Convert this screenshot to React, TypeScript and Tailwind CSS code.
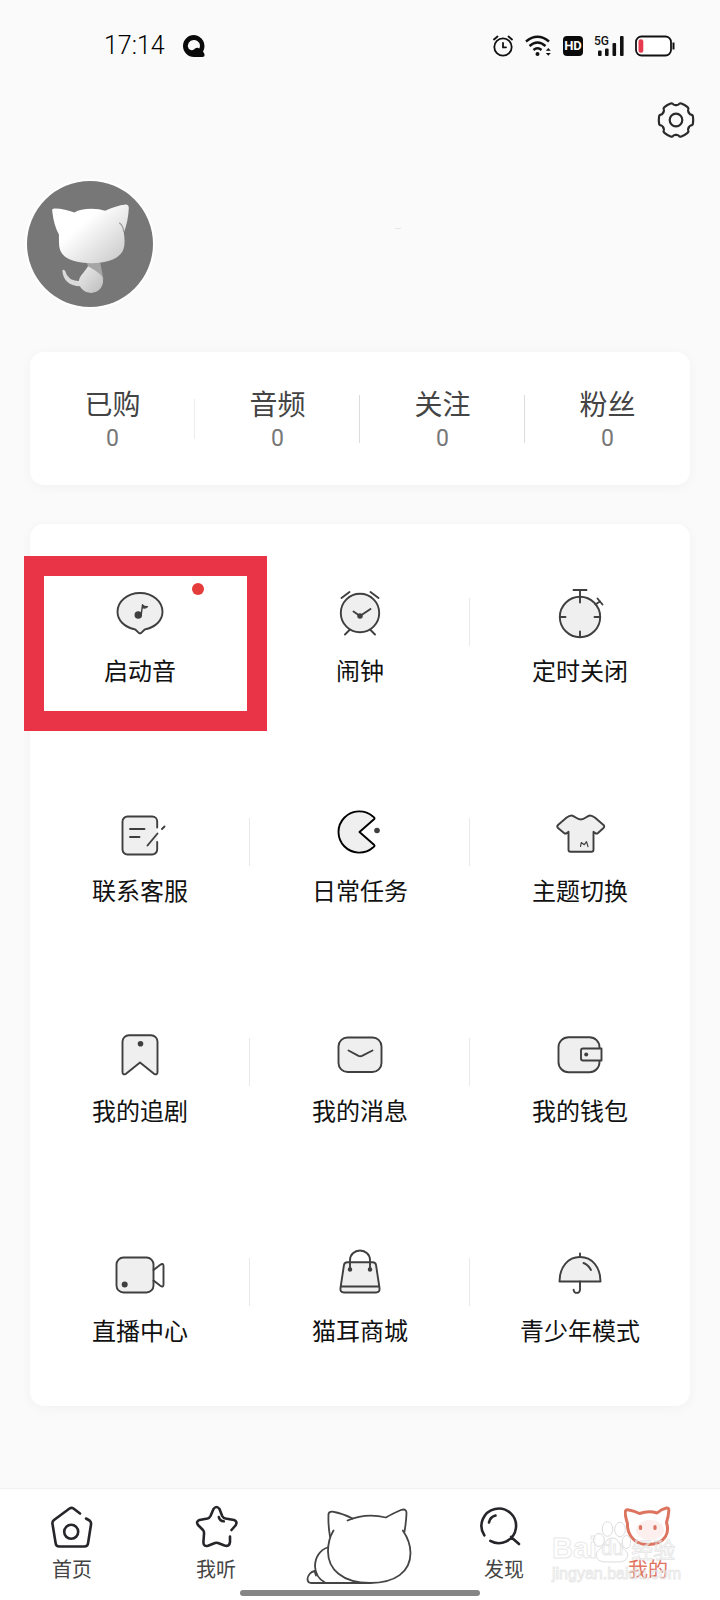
import type { ReactNode } from 'react';
import { clsx } from 'clsx';

const INK = '#3f3f3f';
const SHADE = '#efefef';

const stats = [
  { label: '已购', value: 0, divider: 'h-10 bg-[#ececec]' },
  { label: '音频', value: 0, divider: 'h-12 bg-[#dcdcdc]' },
  { label: '关注', value: 0, divider: 'h-12 bg-[#dcdcdc]' },
  { label: '粉丝', value: 0, divider: '' },
];

function TileIcon({ children, stroke = INK }: { children: ReactNode; stroke?: string }) {
  return (
    <svg
      viewBox="0 0 56 56"
      className="h-14 w-14"
      fill="none"
      stroke={stroke}
      strokeWidth="1.9"
      strokeLinecap="round"
      strokeLinejoin="round"
      aria-hidden="true"
    >
      {children}
    </svg>
  );
}

const tiles = [
  {
    label: '启动音',
    highlighted: true,
    icon: (
      <TileIcon>
        <path
          d="M22.5 44.2C12 42 5.5 35 5.5 26.8 5.5 16.2 15.5 8 28 8s22.5 8.2 22.5 18.8c0 8.2-6.5 15.2-17 17.4-2.2.8-3.6 4.3-5.5 4.3s-3.3-3.5-5.5-4.3z"
          fill={SHADE}
        />
        <circle cx="26.3" cy="30" r="2.8" fill={INK} />
        <path d="M29.2 30 30.5 19.8q1.5 2 5 1.8-2 2.200-5.2 1" fill={INK} strokeWidth="1.4" />
      </TileIcon>
    ),
  },
  {
    label: '闹钟',
    icon: (
      <TileIcon>
        <circle cx="28" cy="28" r="19.2" fill={SHADE} />
        <path d="M9.5 13l8-6M38.5 7l8 6M17.5 45 13 49.5M38.5 45l4.5 4.5" />
        <path d="M21.5 26.5 28 31l10.500-7" />
        <circle cx="28" cy="31" r="1.8" fill={INK} />
      </TileIcon>
    ),
  },
  {
    label: '定时关闭',
    icon: (
      <TileIcon>
        <circle cx="28" cy="32" r="20.2" fill={SHADE} />
        <path d="M21.5 5h13M28 5v12.5M8 32h5.5M42.5 32H48M28 46.5V52" />
        <path d="M45.5 13.5l5 6M43.5 19.5l4.5-3.3" />
      </TileIcon>
    ),
  },
  {
    label: '联系客服',
    icon: (
      <TileIcon>
        <rect x="10.5" y="11.5" width="35" height="38" rx="5" fill={SHADE} stroke="none" />
        <path d="M45.2 22.5v-6a5 5 0 0 0-5-5H15.5a5 5 0 0 0-5 5v28a5 5 0 0 0 5 5h24.7a5 5 0 0 0 5-5v-7.5" />
        <path d="M18 24h14.5M18 32h9.5M35.5 40.5l10-12M50 24l2.5-2.5" />
      </TileIcon>
    ),
  },
  {
    label: '日常任务',
    icon: (
      <TileIcon stroke="#000">
        <path d="M41 11.5A20.8 20.6 0 1 0 41 42.500q2.500-1.500 1-2.800L27.5 27 42 14.300q1.500-1.300-1-2.800z" fill={SHADE} />
        <circle cx="45" cy="25.5" r="2.8" fill={INK} stroke="none" />
      </TileIcon>
    ),
  },
  {
    label: '主题切换',
    icon: (
      <TileIcon>
        <path
          d="M19.5 10.5c3 0 5 4 9.3 4s6.2-4 9.2-4c2.5 0 4 1.5 6 3l7.5 6.5q1.5 1.5 0 3L46 28q-1.5 1.2-3 0l-1.5-1.2v18q0 2-2 2h-21q-2 0-2-2v-18L15 28q-1.5 1.2-3 0l-6-5q-1.5-1.5 0-3l7.5-6.5c2-1.5 3.5-3 6-3z"
          fill={SHADE}
        />
        <path d="M28.5 41.5l.8-4 3 2.200 2.200-3 1.500 5" strokeWidth="1.2" />
      </TileIcon>
    ),
  },
  {
    label: '我的追剧',
    icon: (
      <TileIcon>
        <path d="M17 10.200h22a6.5 6.5 0 0 1 6.5 6.5V47q0 3.5-3.5 1.8L28 37.500 14 48.8q-3.5 1.700-3.5-1.8V16.700a6.5 6.5 0 0 1 6.5-6.5z" fill={SHADE} />
        <circle cx="28.5" cy="18.7" r="2.8" fill={INK} stroke="none" />
      </TileIcon>
    ),
  },
  {
    label: '我的消息',
    icon: (
      <TileIcon>
        <rect x="6.5" y="12.5" width="43" height="34.5" rx="9" fill={SHADE} />
        <path d="M16.5 25.5l10 5.300q1.800.8 3.500 0l10.500-5.300" />
      </TileIcon>
    ),
  },
  {
    label: '我的钱包',
    icon: (
      <TileIcon>
        <rect x="6.5" y="12.2" width="41" height="35" rx="10" fill={SHADE} />
        <path d="M31 23.5h18.5v12H31q-2 0-2-2v-8q0-2 2-2z" fill={SHADE} />
        <circle cx="34.2" cy="29.5" r="2" fill={INK} stroke="none" />
      </TileIcon>
    ),
  },
  {
    label: '直播中心',
    icon: (
      <TileIcon>
        <rect x="4.5" y="12.5" width="37" height="35" rx="7" fill={SHADE} />
        <path d="M41.5 25l6.5-5q3.5-2.5 3.5 1v18.5q0 3.5-3.5 1l-6.5-5" />
        <circle cx="12.7" cy="39.5" r="3" fill={INK} stroke="none" />
      </TileIcon>
    ),
  },
  {
    label: '猫耳商城',
    icon: (
      <TileIcon>
        <path d="M15.5 17.2h25q3.3 0 3.6 3.3l3.4 22.5q.5 4.5-3.5 4.5H12q-4 0-3.5-4.5l3.4-22.5q.3-3.3 3.6-3.3z" fill={SHADE} />
        <path d="M9 41.500h38M18 24.500V15a10 9.5 0 0 1 20 0v9.5" />
        <circle cx="18" cy="24.5" r="1.3" fill={INK} />
        <circle cx="38" cy="24.5" r="1.3" fill={INK} />
      </TileIcon>
    ),
  },
  {
    label: '青少年模式',
    icon: (
      <TileIcon>
        <path d="M7.5 36.5C7.5 22 16 12 28 12s20.5 10 20.5 24.5z" fill={SHADE} />
        <path d="M28 8.5V12M28 36.5v8.2a3.2 3.2 0 0 1-6.4 0M31.5 18q5 2 7.5 7" />
      </TileIcon>
    ),
  },
];

function NavIcon({ children }: { children: ReactNode }) {
  return (
    <svg
      viewBox="0 0 48 48"
      className="h-12 w-12"
      fill="none"
      stroke="#26262a"
      strokeWidth="2.6"
      strokeLinecap="round"
      strokeLinejoin="round"
      aria-hidden="true"
    >
      {children}
    </svg>
  );
}

function HomeIcon() {
  return (
    <NavIcon>
      <path d="M32 10.5 25.5 5.500q-2-1.3-4 0L6 17q-2 1.5-1.5 4l3.2 19.5q.5 3 3.5 3h25.3q3 0 3.5-3L43 21.500q.4-2.5-1.5-4L38 15.500" />
      <circle cx="23.2" cy="28.8" r="7" />
    </NavIcon>
  );
}

function StarIcon() {
  return (
    <NavIcon>
      <path d="M39.5 27l4-4.500q2.500-4-1.500-5.500l-8.500-1.500q-2.300-.5-3.300-2.500L27.500 6q-3-4-6 0l-3 7q-1 2-3 2.500L7.500 17q-4 1.500-1.500 5l5 5q1.300 1.500 1 4l-.6 8.500q.3 4.500 4.600 3.200l7-2.700q1.500-.5 3 0l6.500 2.500q5 1.500 5.500-3.500V33.500" />
      <path d="M26.8 14q.7 4 5 4.300" />
    </NavIcon>
  );
}

function SearchIcon() {
  return (
    <NavIcon>
      <path d="M4.3 32.300A17.3 17.3 0 1 1 10.300 37.900M31 34l8 7M9 19.500q1-5.500 6.500-7" />
    </NavIcon>
  );
}

function MineIcon() {
  return (
    <NavIcon>
      <ellipse cx="26" cy="27" rx="14" ry="10" fill="#fcefee" stroke="none" />
      <g stroke="#dc745f">
        <path d="M3.5 20.500Q.8 12 1.3 8.500 2 6.300 5 7q5.5 1 10.5 3.500 9-3 17.5-.5Q37.500 6 42.500 5q2.500-.3 2.300 2.500-.3 6-2.300 12 2.500 8.500-1 14-5 8-17.500 8-11.500 0-16.500-7.500-4.500-6.500-4-13.500z" strokeWidth="3" />
        <path d="M16.5 23.500v2M31 23.500v2" strokeWidth="3.2" />
      </g>
    </NavIcon>
  );
}

function CatButton() {
  return (
    <svg viewBox="0 0 112 80" className="h-20 w-28" fill="none" stroke="#444" strokeWidth="1.8" strokeLinecap="round" strokeLinejoin="round" aria-hidden="true">
      <path d="M26 31.500Q24 20 24.500 9q.4-2.500 4-2.300Q39 8.500 48.500 13.500" />
      <path d="M43.5 15.500Q62 7.500 82 12.500 88 9 97.500 4.800q5-1.300 5 3.200-.3 9-2 18.500" />
      <path d="M98.8 25.500C104 33 106.500 41 106.500 48 106.500 67 91 78 66 78 38 78 24 64 24 46.500 24 39 25.500 32 29.500 25.500" />
      <path d="M23.5 42.500C16 45 11 52.500 11 61.500q.5 11 10 16" />
      <path d="M10.5 66C6 67 3.800 71 3.500 74q0 4 4 4H66M10.500 66l1.500 4.500" />
    </svg>
  );
}

function SettingsIcon() {
  return (
    <svg viewBox="-20 -20 40 40" className="h-10 w-10" fill="none" stroke="#2b2b2b" strokeWidth="2.2" strokeLinecap="round" aria-hidden="true">
      {[30, 90, 150, 210, 270, 330].map((angle) => (
        <path
          key={angle}
          d="M-7.4 -12.800Q-5.400 -14 -5.400 -15Q-5.400 -16.600 -3.600 -16.900Q0 -17.500 3.600 -16.900Q5.400 -16.600 5.400 -15Q5.400 -14 7.400 -12.800"
          transform={`rotate(${angle})`}
        />
      ))}
      <circle r="6.3" />
    </svg>
  );
}

function Avatar() {
  return (
    <svg viewBox="0 0 125 125" className="h-full w-full" aria-hidden="true">
      <defs>
        <linearGradient id="head" x1="0.1" y1="0.1" x2="0.9" y2="0.8">
          <stop offset="0.35" stopColor="#fff" />
          <stop offset="1" stopColor="#d2d2d2" />
        </linearGradient>
        <linearGradient id="body" x1="0" y1="0" x2="1" y2="1">
          <stop offset="0" stopColor="#ececec" />
          <stop offset="1" stopColor="#bdbdbd" />
        </linearGradient>
      </defs>
      <rect width="125" height="125" fill="#777" />
      <path d="M59 80h13.500l3.500 18-15-12z" fill="#a5a5a5" />
      <path d="M35 88.500q2-1.500 3 1Q40 99 53 99.500v5Q36 103.500 35 88.500z" fill="#dadada" />
      <path d="M60.5 84.500C66 88 75.500 92 75.500 99S70 111 63.500 111 51.500 106 51.500 100 57 91 60.500 84.500z" fill="url(#body)" />
      <path
        d="M25 29.500Q24.500 27 27.500 27.200 38 27.500 47 31.200 53 27.500 64 27.500q8 0 13.500 2Q88 24.500 98 23.300q3 0 3 3.500-.5 13-5 24.500 1.300 7 .5 13C95 75.500 83 81.500 64 81.500S33.500 76 32 65q-.5-7-.3-12Q26.500 44 25 29.500z"
        fill="url(#head)"
      />
      <path d="M91.5 41.500q4 3 4.500 9" fill="none" stroke="#999" strokeWidth="1.2" />
    </svg>
  );
}

function StatusBar() {
  return (
    <header className="flex h-23 items-center pr-[45px] pl-[104px]">
      <span className="font-[Roboto] text-[25px] leading-8 font-light text-black">17:14</span>
      <svg viewBox="0 0 22 22" className="ml-[18px] h-[22px] w-[22px]" aria-hidden="true">
        <path d="M11 0a11 11 0 1 0 0 22h8.500q2.500 0 2-2.500-.3-1.500-1.500-3A11 11 0 0 0 11 0z" fill="#0a0a0a" />
        <path d="M11 5a5.800 5.800 0 0 0-5.300 8.800Q8.500 16.500 11.500 14q2.500-2 4.800-.5A5.800 5.800 0 0 0 11 5z" fill="#fafafa" />
      </svg>

      <div className="ml-auto flex items-center gap-[11px]">
        <svg viewBox="0 0 22 22" className="h-[22px] w-[22px]" fill="none" stroke="#111" strokeWidth="1.8" strokeLinecap="round" aria-hidden="true">
          <circle cx="11" cy="12" r="8.7" />
          <path d="M11 8v4.300h3M2 4.500 5.500 1.500M16.5 1.500 20 4.500" />
        </svg>
        <svg viewBox="0 0 27 22" className="h-[22px] w-[27px]" fill="none" stroke="#111" strokeWidth="2.4" aria-hidden="true">
          <path d="M1 6.500q11.500-9.500 23 0M4.500 11q8-7 16 0M8.500 15q4-3.500 8 0" />
          <circle cx="12.5" cy="19" r="2" fill="#111" stroke="none" />
          <path d="M20.800 15.800 23.300 13l2.500 2.800zM20.800 18 23.300 20.800l2.500-2.800z" fill="#111" stroke="none" />
        </svg>
        <span className="flex h-5 w-5 items-center justify-center rounded-[4px] bg-[#0a0a0a] font-[Roboto] text-[13px] leading-5 font-bold text-white">HD</span>
        <div className="relative h-[22px] w-[30px]">
          <span className="absolute top-0 left-0 font-[Roboto] text-[12px] leading-3 font-medium text-[#111]">5G</span>
          <svg viewBox="0 0 30 22" className="h-full w-full" fill="#111" aria-hidden="true">
            <rect x="4" y="15.500" width="3.6" height="5.500" rx="1" />
            <rect x="11" y="13.500" width="3.6" height="7.500" rx="1" />
            <rect x="18.500" y="8" width="3.6" height="13" rx="1" />
            <rect x="26" y="1" width="3.600" height="20" rx="1" />
          </svg>
        </div>
        <svg viewBox="0 0 40 22" className="h-[22px] w-10" aria-hidden="true">
          <rect x="1" y="1.500" width="35" height="19" rx="5.500" fill="#fff" stroke="#111" strokeWidth="1.800" />
          <rect x="3.500" y="4.200" width="4.800" height="13.500" rx="2.200" fill="#e63a4f" />
          <path d="M38.500 7.500v7" stroke="#111" strokeWidth="2" />
        </svg>
      </div>
    </header>
  );
}

function Tile({ label, icon, highlighted, last }: { label: string; icon: ReactNode; highlighted?: boolean; last: boolean }) {
  return (
    <a href="#" className="relative flex h-[220px] items-start">
      <span className="flex flex-1 flex-col items-center pt-[61px]">
        {icon}
        <span className="mt-[13px] text-[24px] leading-8 text-[#111]">{label}</span>
      </span>
      {!last && <span className="mt-[74px] -ml-px h-12 w-px bg-[#e8e8e8]" />}
      {highlighted && (
        <>
          <span className="absolute top-[59px] right-[46px] h-3 w-3 rounded-full bg-[#e33c3a]" />
          <span className="absolute top-8 -right-[17px] -left-1.5 h-[175px] border-[20px] border-[#e93448]" />
        </>
      )}
    </a>
  );
}

function NavItem({ label, icon, active }: { label: string; icon: ReactNode; active?: boolean }) {
  return (
    <a href="#" className="flex flex-col items-center pt-3.5">
      {icon}
      <span className={clsx('mt-1.5 text-[20px] leading-6', active ? 'text-[#e0745f]' : 'text-[#444]')}>{label}</span>
    </a>
  );
}

function Watermark() {
  return (
    <div className="pointer-events-none absolute top-8 right-10 w-32 text-white/50 select-none [-webkit-text-stroke:1px_#d9d9d999]">
      <div className="flex h-[43px] items-end">
        <span className="font-['Liberation_Sans'] text-[29px] leading-8 font-bold">Bai</span>
        <span className="relative -ml-1 h-[43px] w-[38px]">
          <svg viewBox="0 0 38 43" className="h-full w-full" fill="#fff" fillOpacity="0.6" stroke="#dcdcdc" aria-hidden="true">
            <ellipse cx="6" cy="19" rx="5.3" ry="6.5" />
            <ellipse cx="14.5" cy="8" rx="5.3" ry="7.3" />
            <ellipse cx="27" cy="8.500" rx="5.3" ry="7.3" />
            <ellipse cx="33.500" cy="21" rx="4.3" ry="6.500" />
            <path d="M19 17c6 0 7 6 11 10s6 6 4 10-7 4-15 4-13 0-15-4 0-7 4-10 5-10 11-10z" />
          </svg>
          <span className="absolute bottom-1 left-2 font-['Liberation_Sans'] text-[20px] leading-6">du</span>
        </span>
        <span className="text-[22px] leading-8">经验</span>
      </div>
      <div className="font-['Liberation_Sans'] text-[16px] leading-5">jingyan.baidu.com</div>
    </div>
  );
}

export default function App() {
  return (
    <div className="flex min-h-screen flex-col bg-[#fafafa] font-['Noto_Sans_CJK_SC',sans-serif]">
      <StatusBar />

      <div className="flex h-14 items-center justify-end pr-6">
        <button type="button" aria-label="设置">
          <SettingsIcon />
        </button>
      </div>

      <main className="flex flex-col px-[30px]">
        <section className="mt-[31px] -ml-[5px] flex items-center">
          <div className="h-[130px] w-[130px] overflow-hidden rounded-full border-2 border-white">
            <Avatar />
          </div>
          <span className="mb-8 ml-60 h-px w-1.5 bg-[#e6e6e6]" />
        </section>

        <section className="mt-[43px] flex h-[133px] items-center rounded-[14px] bg-white shadow-[0_2px_12px_rgba(0,0,0,0.04)]">
          {stats.map((stat) => (
            <div key={stat.label} className="flex flex-1 items-center">
              <a href="#" className="flex flex-1 flex-col items-center">
                <span className="text-[28px] leading-9 text-[#444]">{stat.label}</span>
                <span className="mt-1 font-[Roboto] text-[23px] leading-7 text-[#777]">{stat.value}</span>
              </a>
              {stat.divider && <span className={clsx('-ml-px w-px', stat.divider)} />}
            </div>
          ))}
        </section>

        <section className="mt-[39px] mb-10 grid grid-cols-3 rounded-[14px] bg-white pb-0.5 shadow-[0_2px_12px_rgba(0,0,0,0.04)]">
          {tiles.map((tile, i) => (
            <Tile key={tile.label} label={tile.label} icon={tile.icon} highlighted={tile.highlighted} last={i % 3 === 2} />
          ))}
        </section>
      </main>

      <nav className="relative mt-auto grid h-28 grid-cols-5 border-t border-[#f1f1f1] bg-white">
        <NavItem label="首页" icon={<HomeIcon />} />
        <NavItem label="我听" icon={<StarIcon />} />
        <button type="button" aria-label="播放" className="flex justify-center pt-4">
          <CatButton />
        </button>
        <NavItem label="发现" icon={<SearchIcon />} />
        <NavItem label="我的" icon={<MineIcon />} active />
        <Watermark />
        <span className="absolute bottom-1 left-1/3 h-1.5 w-1/3 rounded-full bg-[#858585]" />
      </nav>
    </div>
  );
}
